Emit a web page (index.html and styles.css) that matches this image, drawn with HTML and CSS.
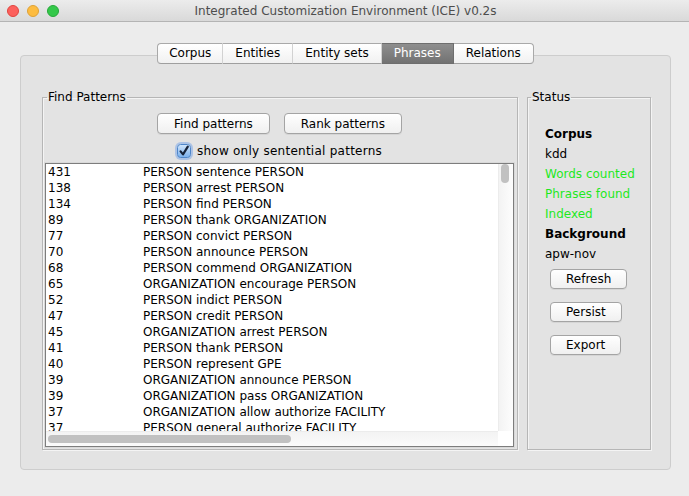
FILE: index.html
```html
<!DOCTYPE html>
<html lang="en">
<head>
<meta charset="utf-8">
<title>Integrated Customization Environment (ICE) v0.2s</title>
<link rel="stylesheet" href="styles.css">
</head>
<body>
<header class="titlebar">
  <div class="lights">
    <span class="light red"></span>
    <span class="light yellow"></span>
    <span class="light green"></span>
  </div>
  <div class="title">Integrated Customization Environment (ICE) v0.2s</div>
  <div></div>
</header>
<main class="main">
  <nav class="tabs">
    <span class="tab first">Corpus</span>
    <span class="tab">Entities</span>
    <span class="tab">Entity sets</span>
    <span class="tab selected">Phrases</span>
    <span class="tab last">Relations</span>
  </nav>
  <section class="pane">
    <fieldset class="group find">
      <legend>Find Patterns</legend>
      <div class="btnrow">
        <button class="btn big">Find patterns</button>
        <button class="btn big">Rank patterns</button>
      </div>
      <label class="check">
        <span class="box"><svg width="14" height="14" viewBox="0 0 14 14"><defs><linearGradient id="cb" x1="0" y1="0" x2="0" y2="1"><stop offset="0" stop-color="#d3e7fc"/><stop offset="1" stop-color="#78aeec"/></linearGradient></defs><rect x="0.5" y="0.5" width="13" height="13" rx="3" fill="url(#cb)" stroke="#4f86c9"/><path d="M3.6 7.4 L6 10.4 L10.8 2.6" fill="none" stroke="#16233a" stroke-width="2.2" stroke-linecap="round" stroke-linejoin="round"/></svg></span>
        <span class="check-label">show only sentential patterns</span>
      </label>
      <div class="list">
        <div class="list-main">
          <div class="rows">
            <div class="row"><span>431</span><span>PERSON sentence PERSON</span></div>
            <div class="row"><span>138</span><span>PERSON arrest PERSON</span></div>
            <div class="row"><span>134</span><span>PERSON find PERSON</span></div>
            <div class="row"><span>89</span><span>PERSON thank ORGANIZATION</span></div>
            <div class="row"><span>77</span><span>PERSON convict PERSON</span></div>
            <div class="row"><span>70</span><span>PERSON announce PERSON</span></div>
            <div class="row"><span>68</span><span>PERSON commend ORGANIZATION</span></div>
            <div class="row"><span>65</span><span>ORGANIZATION encourage PERSON</span></div>
            <div class="row"><span>52</span><span>PERSON indict PERSON</span></div>
            <div class="row"><span>47</span><span>PERSON credit PERSON</span></div>
            <div class="row"><span>45</span><span>ORGANIZATION arrest PERSON</span></div>
            <div class="row"><span>41</span><span>PERSON thank PERSON</span></div>
            <div class="row"><span>40</span><span>PERSON represent GPE</span></div>
            <div class="row"><span>39</span><span>ORGANIZATION announce PERSON</span></div>
            <div class="row"><span>39</span><span>ORGANIZATION pass ORGANIZATION</span></div>
            <div class="row"><span>37</span><span>ORGANIZATION allow authorize FACILITY</span></div>
            <div class="row"><span>37</span><span>PERSON general authorize FACILITY</span></div>
          </div>
          <div class="vtrack"><div class="vthumb"></div></div>
        </div>
        <div class="hbar">
          <div class="htrack"><div class="hthumb"></div></div>
          <div class="corner"></div>
        </div>
      </div>
    </fieldset>
    <fieldset class="group status">
      <legend>Status</legend>
      <div class="status-body">
        <div class="line bold">Corpus</div>
        <div class="line">kdd</div>
        <div class="line ok">Words counted</div>
        <div class="line ok">Phrases found</div>
        <div class="line ok">Indexed</div>
        <div class="line bold">Background</div>
        <div class="line">apw-nov</div>
        <div class="status-buttons">
          <button class="btn small">Refresh</button>
          <button class="btn small">Persist</button>
          <button class="btn small">Export</button>
        </div>
      </div>
    </fieldset>
  </section>
</main>
</body>
</html>
```
FILE: styles.css
```css
* { box-sizing: border-box; }

body {
  margin: 0;
  width: 689px;
  height: 496px;
  overflow: hidden;
  background: #ececec;
  font-family: "DejaVu Sans", sans-serif;
  font-size: 12px;
  color: #000;
}

.titlebar {
  height: 22px;
  border-bottom: 1px solid #b4b4b4;
  background: linear-gradient(#ececec, #d9d9d9);
  display: grid;
  grid-template-columns: 1fr auto 1fr;
  align-items: center;
}

.lights {
  display: flex;
  gap: 8px;
  padding-left: 7px;
}

.light {
  width: 12px;
  height: 12px;
  border-radius: 50%;
}
.red { background: #fc605c; border: 1px solid #e0443e; }
.yellow { background: #fdbc40; border: 1px solid #dea236; }
.green { background: #34c84a; border: 1px solid #27a839; }

.title {
  font-family: "DejaVu Sans", sans-serif;
  font-size: 12px;
  color: #4d4d4d;
  padding-left: 2px;
}

.tabs {
  display: flex;
  justify-content: center;
  margin-top: 21px;
  padding-left: 2px;
  position: relative;
  z-index: 1;
}

.tab {
  height: 21px;
  line-height: 19px;
  padding: 0 12px;
  border-top: 1px solid #a9a9a9;
  border-bottom: 1px solid #9f9f9f;
  border-right: 1px solid #d2d2d2;
  background: linear-gradient(#ffffff, #f1f1f1);
}
.tab.first {
  border-left: 1px solid #a9a9a9;
  border-radius: 4px 0 0 4px;
  padding: 0 11px;
}
.tab.last {
  border-right: 1px solid #a9a9a9;
  border-radius: 0 4px 4px 0;
}
.tab.selected {
  background: linear-gradient(#8e8e8e, #727272);
  color: #fff;
  border-color: #6e6e6e;
  border-right-color: #6e6e6e;
}

.pane {
  margin: -9px 18px 0 20px;
  border: 1px solid #cdcdcd;
  border-radius: 4px;
  background: #e3e3e3;
  padding: 34px 19px 19px 21px;
  display: flex;
  gap: 9px;
}

.group {
  margin: 0;
  min-width: 0;
  border: 1px solid #b6b6b6;
  box-shadow: inset 1px 1px 0 #f4f4f4, 1px 1px 0 #f4f4f4;
}

.group legend {
  line-height: 15px;
  padding: 0 1px;
}

.find {
  width: 476px;
  flex: none;
  padding: 8px 3px 2px 2px;
}
.find legend { margin-left: 2px; }

.status {
  flex: 1;
  padding: 19px 5px 0 5px;
}
.status legend { margin-left: -2px; }

.btnrow {
  display: flex;
  justify-content: center;
  gap: 14px;
}

.btn {
  font-family: "DejaVu Sans", sans-serif;
  font-size: 12px;
  color: #000;
  border: 1px solid #a4a4a4;
  border-radius: 4px;
  background: linear-gradient(#ffffff, #f0f0f0);
  box-shadow: 0 1px 0 rgba(0, 0, 0, 0.06);
  margin: 0;
}
.btn.big {
  height: 21px;
  padding: 0 16px;
}
.btn.small {
  height: 20px;
  padding: 0 15px;
}

.check {
  display: flex;
  justify-content: center;
  align-items: center;
  gap: 6px;
  height: 16px;
  margin-top: 9px;
}

.check-label {
  letter-spacing: 0.25px;
}

.box {
  display: flex;
  width: 14px;
  height: 14px;
  border-radius: 4px;
  box-shadow: 0 0 0 2px rgba(118, 164, 234, 0.5);
}

.list {
  margin-top: 4px;
  height: 284px;
  border: 1px solid #7d7d7d;
  box-shadow: 0 0 0 1px #d9d9d9;
  background: #fff;
  display: flex;
  flex-direction: column;
}

.list-main {
  flex: 1;
  min-height: 0;
  display: flex;
}

.rows {
  flex: 1;
  min-width: 0;
  overflow: hidden;
  padding-left: 2px;
}

.row {
  display: grid;
  grid-template-columns: 95px auto;
  height: 16px;
  line-height: 16px;
  white-space: nowrap;
}

.vtrack {
  width: 15px;
  border-left: 1px solid #ececec;
  background: linear-gradient(90deg, #f3f3f3, #fdfdfd);
  padding-left: 2px;
}
.vthumb {
  width: 8px;
  height: 19px;
  border-radius: 4px;
  background: #c1c1c1;
}

.hbar {
  height: 15px;
  display: flex;
}
.htrack {
  flex: 1;
  border-top: 1px solid #ececec;
  background: linear-gradient(#f3f3f3, #fbfbfb);
  padding: 3px 0 0 2px;
}
.hthumb {
  width: 243px;
  height: 8px;
  border-radius: 4px;
  background: #c1c1c1;
}
.corner {
  width: 15px;
  background: #fff;
}

.status-body {
  padding-left: 12px;
}

.line {
  line-height: 20px;
  white-space: nowrap;
}
.line.bold { font-weight: bold; }
.line.ok { color: #1ee81e; }

.status-buttons {
  margin-top: 5px;
  margin-left: 5px;
  display: flex;
  flex-direction: column;
  align-items: flex-start;
  gap: 13px;
}
```
